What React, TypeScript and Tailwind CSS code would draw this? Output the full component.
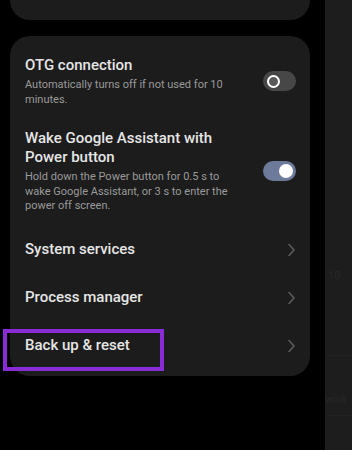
import React from 'react';

const font = { fontFamily: 'Roboto, "Noto Sans", sans-serif' };

function Toggle({ on }: { on: boolean }) {
    if (on) {
        return (
            <div className="w-[33px] h-[20px] rounded-full bg-[#6d7a99] flex items-center justify-end pr-[3px] shrink-0">
                <div className="w-[14px] h-[14px] rounded-full bg-white" />
            </div>
        );
    }
    return (
        <div className="w-[33px] h-[20px] rounded-full bg-[#474747] flex items-center pl-[4px] shrink-0">
            <div className="w-[13px] h-[13px] rounded-full border-[2.5px] border-white bg-[#5a5a5a]" />
        </div>
    );
}

function Chevron() {
    return (
        <svg width="9" height="14" viewBox="0 0 9 14" fill="none" className="shrink-0">
            <path d="M2 1.5l5 5.5-5 5.5" stroke="#5c5c5c" strokeWidth="1.6" strokeLinecap="round" strokeLinejoin="round" />
        </svg>
    );
}

function LinkRow({ label }: { label: string }) {
    return (
        <div className="h-[48px] flex items-center justify-between pr-[14px]">
            <span className="text-[15px] font-medium text-[#e6e6e6]">{label}</span>
            <Chevron />
        </div>
    );
}

export default function App() {
    return (
        <div className="relative flex h-[450px] w-[352px] bg-black overflow-hidden" style={font}>
            {/* phone settings column */}
            <div className="w-[325px] pl-[10px] pr-[15px] flex flex-col">
                <div className="h-[20px] bg-[#1c1c1c] rounded-b-[20px]" />

                <div className="mt-[16px] h-[340px] bg-[#1c1c1c] rounded-[20px] pl-[15px] pt-[19px] flex flex-col">
                    <div className="flex items-center justify-between pr-[14px]">
                        <div className="w-[220px]">
                            <div className="text-[15px] leading-[20px] font-medium text-[#e6e6e6]">OTG connection</div>
                            <div className="mt-[2px] text-[11px] leading-[15px] text-[#9a9a9a]">
                                Automatically turns off if not used for 10 minutes.
                            </div>
                        </div>
                        <Toggle on={false} />
                    </div>

                    <div className="mt-[22px] flex items-center justify-between pr-[14px]">
                        <div className="w-[218px]">
                            <div className="text-[15px] leading-[19px] font-medium text-[#e6e6e6]">
                                Wake Google Assistant with Power button
                            </div>
                            <div className="mt-[3px] text-[11px] leading-[14.5px] text-[#9a9a9a]">
                                Hold down the Power button for 0.5 s to wake Google Assistant, or 3 s to enter the power off screen.
                            </div>
                        </div>
                        <Toggle on={true} />
                    </div>

                    <div className="mt-[12px]">
                        <LinkRow label="System services" />
                        <LinkRow label="Process manager" />
                        <LinkRow label="Back up & reset" />
                    </div>
                </div>
            </div>

            {/* neighbouring panel edge */}
            <div className="flex-1 bg-[#1d1d1d] flex flex-col">
                <div className="h-[268px]" />
                <div className="text-[11px] text-[#282828] pl-[3px]">10</div>
                <div className="mt-[70px] border-t border-[#222222]" />
                <div className="mt-[36px] text-[10px] text-[#282828]">work</div>
                <div className="mt-[8px] border-t border-[#222222]" />
            </div>

            {/* highlight annotation */}
            <div className="absolute left-[3px] top-[329px] w-[161px] h-[42px] border-[4px] border-[#8a2cd6]" />
        </div>
    );
}
